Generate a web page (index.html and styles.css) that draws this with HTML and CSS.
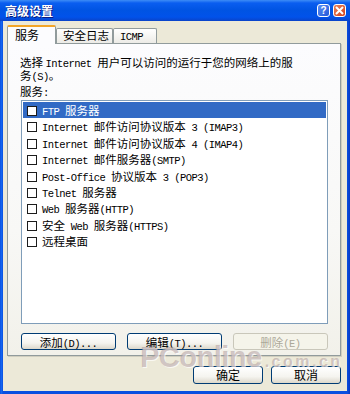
FILE: index.html
```html
<!DOCTYPE html>
<html lang="zh-CN">
<head>
  <meta charset="UTF-8" />
  <title>高级设置</title>
  <link rel="stylesheet" href="styles.css">
</head>
<body>
  <div class="window">
    <div class="titlebar">
      <span class="title">高级设置</span>
      <span class="tbtn help">?</span>
      <span class="tbtn close">
        <svg width="9" height="9" viewBox="0 0 9 9"><path d="M1 1L8 8M8 1L1 8" stroke="#fff" stroke-width="2"/></svg>
      </span>
    </div>
    <div class="client">
      <div class="tabs">
        <div class="tab active">服务</div>
        <div class="tab">安全日志</div>
        <div class="tab"><span class="en">ICMP</span></div>
      </div>
      <div class="panel">
        <p class="intro">选择 <span class="en">Internet </span>用户可以访问的运行于您的网络上的服<br>务<span class="en">(S)</span>。</p>
        <p class="caption">服务<span class="en">:</span></p>
        <ul class="list">
          <li class="selected"><i class="chk"></i><span class="en">FTP </span>服务器</li>
          <li><i class="chk"></i><span class="en">Internet </span>邮件访问协议版本<span class="en"> 3 (IMAP3)</span></li>
          <li><i class="chk"></i><span class="en">Internet </span>邮件访问协议版本<span class="en"> 4 (IMAP4)</span></li>
          <li><i class="chk"></i><span class="en">Internet </span>邮件服务器<span class="en">(SMTP)</span></li>
          <li><i class="chk"></i><span class="en">Post-Office </span>协议版本<span class="en"> 3 (POP3)</span></li>
          <li><i class="chk"></i><span class="en">Telnet </span>服务器</li>
          <li><i class="chk"></i><span class="en">Web </span>服务器<span class="en">(HTTP)</span></li>
          <li><i class="chk"></i>安全<span class="en"> Web </span>服务器<span class="en">(HTTPS)</span></li>
          <li><i class="chk"></i>远程桌面</li>
        </ul>
        <div class="actions">
          <button class="btn wide">添加<span class="en">(D)...</span></button>
          <button class="btn wide">编辑<span class="en">(T)...</span></button>
          <button class="btn wide" disabled>删除<span class="en">(E)</span></button>
        </div>
      </div>
      <div class="footer">
        <button class="btn">确定</button>
        <button class="btn">取消</button>
      </div>
      <div class="watermark">PConline<small>.com.cn</small></div>
    </div>
  </div>
</body>
</html>
```
FILE: styles.css
```css
* { box-sizing: border-box; }
html, body {
  margin: 0;
  padding: 0;
  width: 350px;
  height: 394px;
  overflow: hidden;
  font-family: "Noto Sans CJK SC", sans-serif;
  font-size: 11.5px;
  color: #000;
}
.en {
  font-family: "Liberation Mono", monospace;
  font-size: 10.5px;
  letter-spacing: -0.55px;
  line-height: 0;
}
.window {
  width: 350px;
  height: 394px;
  display: flex;
  flex-direction: column;
  background: linear-gradient(90deg, #0842d4 0, #166cf5 1px, #0a4fe0 3px, #0a4fe0 347px, #0839c4 350px);
}
.titlebar {
  height: 21px;
  display: flex;
  align-items: center;
  padding: 0 4px 0 5px;
  background: linear-gradient(180deg, #3d8cf6 0, #0a5ef0 3px, #0054e3 10px, #0152ea 17px, #0a43c8 21px);
}
.title {
  flex: 1;
  color: #fff;
  font-weight: bold;
  font-size: 12px;
  text-shadow: 1px 1px 0 #0a1a80;
}
.tbtn {
  width: 13px;
  height: 13px;
  border: 1px solid #fff;
  border-radius: 3px;
  display: flex;
  align-items: center;
  justify-content: center;
  color: #fff;
  font: bold 10px "Liberation Sans", sans-serif;
}
.help {
  background: linear-gradient(135deg, #5a8ef5, #2458d8);
  margin-right: 3px;
}
.close {
  background: linear-gradient(135deg, #e8825c, #d2421c);
}
.client {
  position: relative;
  flex: 1;
  margin: 0 3px 3px;
  background: #ece9d8;
  padding: 4px 6px 0 4px;
}
.tabs {
  display: flex;
  align-items: flex-end;
  height: 18px;
  position: relative;
  z-index: 1;
}
.tab {
  height: 15px;
  padding: 0 6px;
  border: 1px solid #919b9c;
  border-bottom: none;
  border-radius: 2px 2px 0 0;
  background: linear-gradient(180deg, #fff, #ecebe6);
  line-height: 13px;
  white-space: nowrap;
}
.tab:nth-child(2) { width: 57px; }
.tab:nth-child(3) { width: 44px; }
.tab.active {
  width: 49px;
  height: 19px;
  margin-bottom: -1px;
  padding: 0 7px;
  background: #fcfcfe;
  border-top: 2px solid #f3a528;
  line-height: 16px;
  font-size: 12px;
}
.panel {
  height: 313px;
  border: 1px solid #919b9c;
  background: linear-gradient(180deg, #fcfcfe 0, #f8f8f6 60%, #f2f1ea 100%);
  padding: 12px 12px 0 12px;
  box-shadow: 1px 1px 0 #d0cebf;
}
.intro {
  margin: 0;
  height: 25px;
  line-height: 12.5px;
}
.caption {
  margin: 4px 0 0;
  height: 12px;
  line-height: 12px;
}
.list {
  list-style: none;
  margin: 3px 0 0 1px;
  padding: 1px;
  width: 307px;
  height: 224px;
  background: #fff;
  border: 1px solid #7f9db9;
}
.list li {
  height: 16.4px;
  line-height: 16.4px;
  padding-left: 4px;
  white-space: nowrap;
}
.list li.selected {
  background: #316ac5;
  color: #fff;
}
.chk {
  display: inline-block;
  vertical-align: -1px;
  width: 10px;
  height: 10px;
  border: 1px solid #1c1c1c;
  background: #fff;
  margin-right: 5px;
}
.actions {
  display: flex;
  gap: 11px;
  margin: 9px 0 0 1px;
}
.btn {
  font-family: "Noto Sans CJK SC", sans-serif;
  font-size: 11.5px;
  color: #000;
  height: 17px;
  padding: 0;
  border: 1px solid #003c74;
  border-radius: 3px;
  background: linear-gradient(180deg, #ffffff 0, #f5f4ef 60%, #dcd8cb 100%);
  line-height: 14px;
}
.btn.wide { width: 95px; }
.btn[disabled] {
  color: #aca899;
  border-color: #c9c7ba;
  background: #f5f4ea;
}
.footer {
  display: flex;
  justify-content: flex-end;
  gap: 8px;
  margin-top: 10px;
}
.footer .btn {
  width: 70px;
  height: 18px;
  font-size: 12px;
}
.watermark {
  position: absolute;
  left: 137px;
  top: 320px;
  font: bold 29px "Liberation Sans", sans-serif;
  letter-spacing: -0.5px;
  color: rgba(175, 155, 155, 0.55);
  text-shadow: 1px 1px 0 rgba(255, 255, 255, 0.7);
  pointer-events: none;
}
.watermark small {
  font-size: 16px;
  letter-spacing: 2.5px;
  margin-left: 3px;
}
```
